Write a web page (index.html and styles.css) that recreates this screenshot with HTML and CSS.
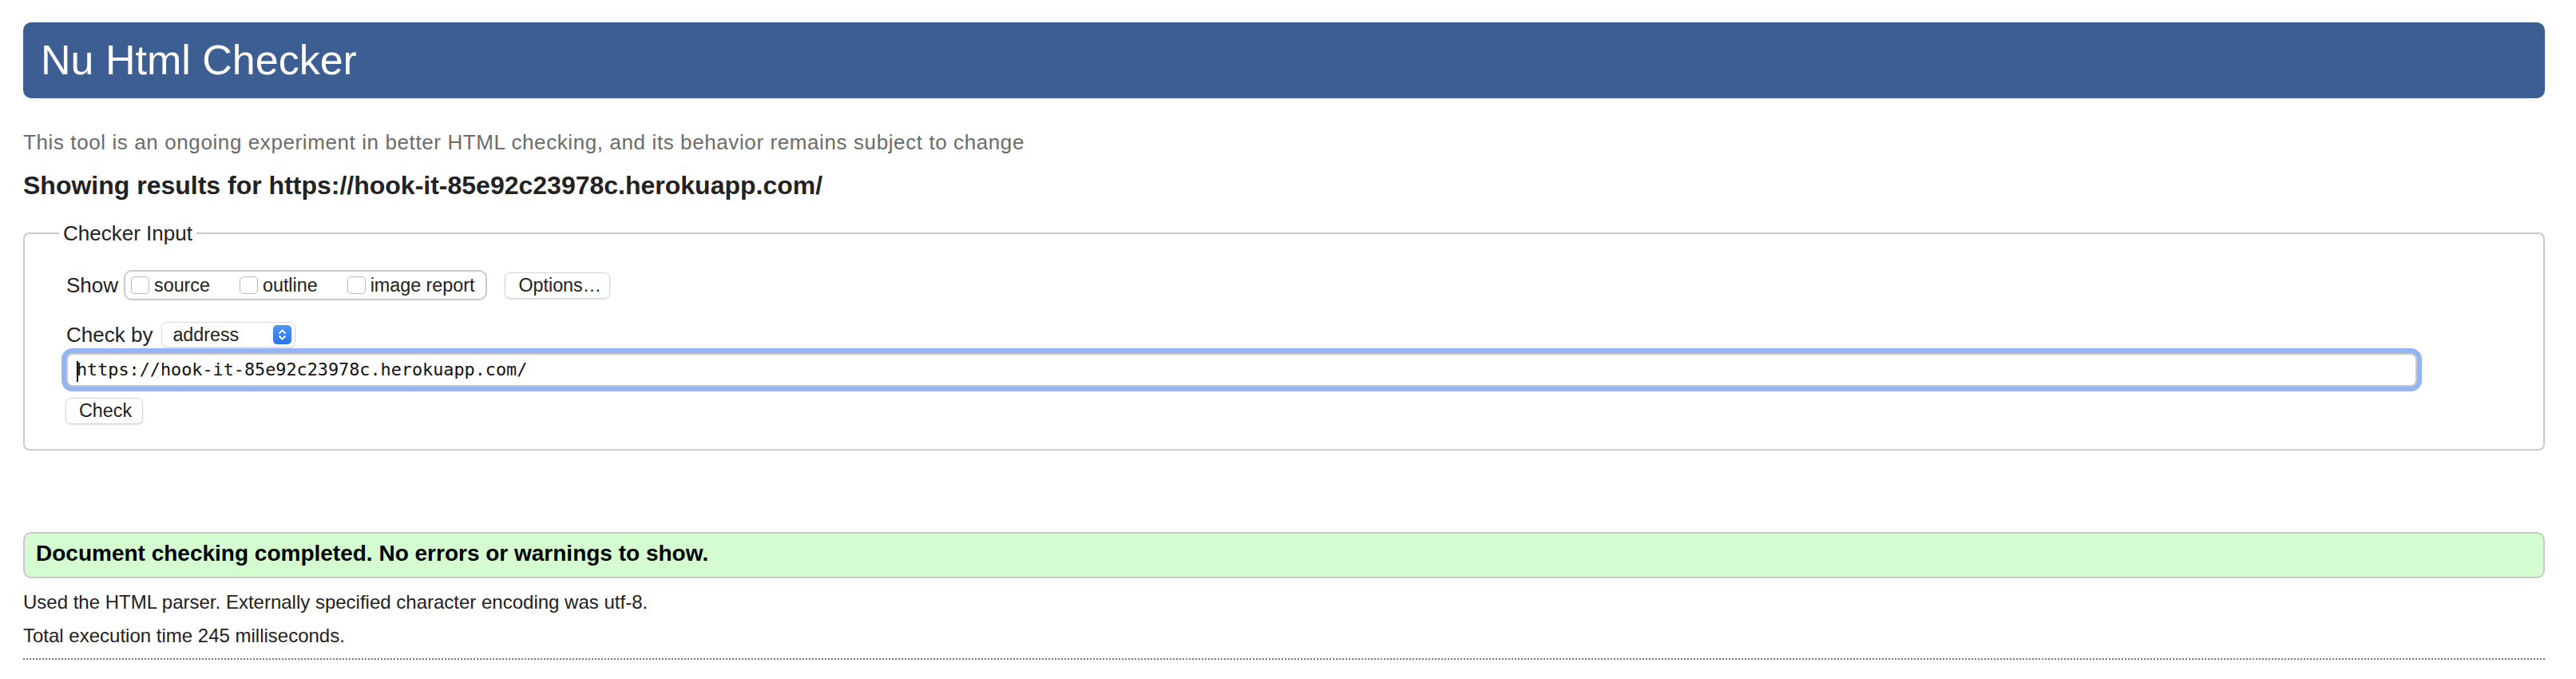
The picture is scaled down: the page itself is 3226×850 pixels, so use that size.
FILE: index.html
```html
<!DOCTYPE html>
<html lang="en">
<head>
<meta charset="utf-8">
<title>Nu Html Checker</title>
<link rel="stylesheet" href="styles.css">
</head>
<body>
<h1 class="title">Nu Html Checker</h1>
<p class="about">This tool is an ongoing experiment in better HTML checking, and its behavior remains subject to change</p>
<h2 class="showing">Showing results for https://hook-it-85e92c23978c.herokuapp.com/</h2>

<fieldset class="input-box">
  <legend class="legend">Checker Input</legend>
  <div class="row row-show">
    <span class="label">Show</span>
    <div class="group">
      <label class="opt"><span class="cb"></span><span class="opt-text">source</span></label>
      <label class="opt"><span class="cb"></span><span class="opt-text">outline</span></label>
      <label class="opt"><span class="cb"></span><span class="opt-text">image report</span></label>
    </div>
    <button class="btn btn-options" type="button">Options…</button>
  </div>
  <div class="row row-by">
    <span class="label">Check by</span>
    <div class="select">
      <span class="select-text">address</span>
      <svg class="stepper" width="23" height="24" viewBox="0 0 23 24">
        <defs>
          <linearGradient id="sg" x1="0" y1="0" x2="0" y2="1">
            <stop offset="0" stop-color="#4f95f7"/>
            <stop offset="1" stop-color="#2a74ea"/>
          </linearGradient>
        </defs>
        <rect x="0" y="0" width="23" height="24" rx="5" fill="url(#sg)"/>
        <path d="M8 10 L11.5 6.5 L15 10" fill="none" stroke="#fff" stroke-width="1.8" stroke-linecap="round" stroke-linejoin="round"/>
        <path d="M8 14 L11.5 17.5 L15 14" fill="none" stroke="#fff" stroke-width="1.8" stroke-linecap="round" stroke-linejoin="round"/>
      </svg>
    </div>
  </div>
  <div class="url-field"><span class="caret"></span><span class="url-text">https://hook-it-85e92c23978c.herokuapp.com/</span></div>
  <div class="row row-submit">
    <button class="btn btn-check" type="button">Check</button>
  </div>
</fieldset>

<div class="success">Document checking completed. No errors or warnings to show.</div>
<p class="details">Used the HTML parser. Externally specified character encoding was utf-8.</p>
<p class="details details-time">Total execution time 245 milliseconds.</p>
<hr class="dotted">
</body>
</html>
```
FILE: styles.css
```css
html, body {
  margin: 0;
  background: #ffffff;
}
body {
  padding: 28px 39px 0 29px;
  font-family: "Liberation Sans", Arial, Helvetica, sans-serif;
  color: #222222;
}
.title {
  margin: 0;
  height: 95px;
  line-height: 95px;
  padding-left: 22px;
  background: #3d5e92;
  color: #ffffff;
  border-radius: 10px;
  font-size: 52px;
  font-weight: normal;
}
.about {
  margin: 40px 0 0;
  font-size: 26px;
  line-height: 30px;
  letter-spacing: 0.6px;
  color: #6b6b6b;
}
.showing {
  margin: 21px 0 0;
  font-size: 32px;
  line-height: 37px;
  font-weight: bold;
  color: #222222;
}
.input-box {
  margin: 26px 0 0;
  padding: 0 0 31px 52px;
  border: 2px solid #cacaca;
  border-radius: 8px;
  min-width: 0;
}
.legend {
  margin-left: -9px;
  padding: 0 5px;
  font-size: 26px;
  line-height: 30px;
  color: #222222;
}
.row {
  display: flex;
  align-items: center;
}
.row-show {
  margin-top: 31px;
  height: 38px;
}
.label {
  font-size: 26px;
  line-height: 30px;
}
.group {
  display: flex;
  align-items: center;
  gap: 37px;
  box-sizing: border-box;
  height: 38px;
  margin-left: 7px;
  padding: 0 14px 0 7px;
  border: 2px solid #c9c9c9;
  border-radius: 10px;
}
.opt {
  display: flex;
  align-items: center;
}
.cb {
  box-sizing: border-box;
  width: 23px;
  height: 22px;
  border: 1px solid #b9b9b9;
  border-radius: 5px;
  background: #ffffff;
}
.opt-text {
  margin-left: 6px;
  font-size: 23.3px;
  line-height: 28px;
}
.btn {
  box-sizing: border-box;
  height: 33px;
  padding: 0 16px;
  border: 1px solid #d4d4d4;
  border-radius: 7px;
  background: #ffffff;
  box-shadow: 0 1px 2px rgba(0, 0, 0, 0.12);
  font-family: "Liberation Sans", Arial, Helvetica, sans-serif;
  font-size: 23.3px;
  color: #222222;
}
.btn-options {
  margin-left: 22px;
  width: 132px;
}
.row-by {
  margin-top: 27px;
  height: 32px;
}
.select {
  box-sizing: border-box;
  display: flex;
  align-items: center;
  justify-content: space-between;
  width: 168px;
  height: 32px;
  margin-left: 11px;
  padding: 0 4px 0 13px;
  border: 1px solid #dadada;
  border-radius: 7px;
  background: #ffffff;
  box-shadow: 0 1px 2px rgba(0, 0, 0, 0.1);
}
.select-text {
  font-size: 23.3px;
  line-height: 28px;
}
.stepper {
  display: block;
}
.url-field {
  box-sizing: border-box;
  position: relative;
  display: flex;
  align-items: center;
  width: 2944px;
  height: 42px;
  margin-top: 7px;
  padding-left: 11px;
  border: 2px solid #c8c8c8;
  border-radius: 8px;
  box-shadow: 0 0 0 6px #94b4f4;
  background: #ffffff;
}
.url-text {
  font-family: "DejaVu Sans Mono", "Liberation Mono", monospace;
  font-size: 21.8px;
  line-height: 26px;
  color: #111111;
}
.caret {
  position: absolute;
  left: 11px;
  top: 8px;
  width: 2px;
  height: 26px;
  background: #000000;
}
.row-submit {
  margin-top: 14px;
  margin-left: -1px;
}
.btn-check {
  width: 97px;
}
.success {
  box-sizing: border-box;
  margin-top: 102px;
  height: 58px;
  padding: 0 0 4px 14px;
  line-height: 50px;
  border: 2px solid #c9c9c9;
  border-radius: 10px;
  background: #d5fbd0;
  font-size: 28px;
  font-weight: bold;
  color: #000000;
}
.details {
  margin: 16px 0 0;
  font-size: 24px;
  line-height: 28px;
  color: #222222;
}
.details-time {
  margin-top: 14px;
}
.dotted {
  margin: 14px 0 0;
  height: 0;
  border: 0;
  border-top: 2px dotted #777777;
}
```
